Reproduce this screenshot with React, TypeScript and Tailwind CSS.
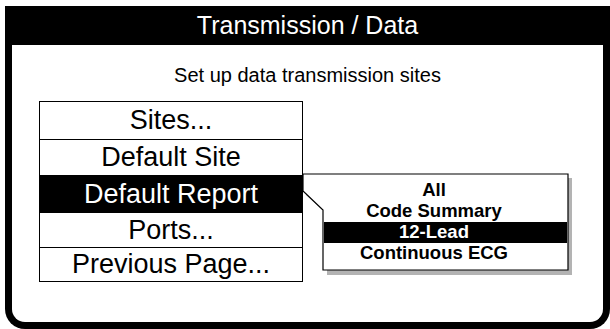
import React from "react";

const font = { fontFamily: '"Liberation Sans", Arial, sans-serif' };

export default function App() {
  const rows = [
    { label: "Sites...", h: "h-[37px]", active: false },
    { label: "Default Site", h: "h-[36px]", active: false },
    { label: "Default Report", h: "h-[38px]", active: true },
    { label: "Ports...", h: "h-[34px]", active: false },
    { label: "Previous Page...", h: "h-[34px]", active: false },
  ];
  const opts = [
    { label: "All", active: false },
    { label: "Code Summary", active: false },
    { label: "12-Lead", active: true },
    { label: "Continuous ECG", active: false },
  ];
  return (
    <div className="relative w-[610px] h-[329px] bg-white overflow-hidden pt-[6px] pl-[5px]" style={font}>
      <div className="w-[605px] h-[323px] border-x-[7px] border-b-[7px] border-black rounded-b-[20px] bg-white flex flex-col">
        <div className="h-[39px] bg-black flex items-center justify-center text-white text-[25px] leading-none">
          Transmission / Data
        </div>
        <div className="mt-[19px] text-center text-[20px] leading-[22px] text-black">
          Set up data transmission sites
        </div>
        <div className="mt-[15px] ml-[27px] w-[264px] border border-black flex flex-col">
          {rows.map((r, i) => (
            <div
              key={r.label}
              className={`${r.h} flex items-center justify-center text-[27px] leading-none ${
                r.active ? "bg-black text-white" : "bg-white text-black"
              } ${i > 0 && !r.active && !rows[i - 1].active ? "border-t border-black" : ""}`}
            >
              {r.label}
            </div>
          ))}
        </div>
      </div>

      {/* callout popup */}
      <svg className="absolute left-[302px] top-[173px]" width="272" height="104" viewBox="0 0 272 104">
        <polygon points="4,5 270,5 270,102 25,102 25,41 4,22" fill="#b3b3b3" />
        <polygon
          points="1,1 266,1 266,97 21,97 21,37 1,18"
          fill="white"
          stroke="black"
          strokeWidth="1.2"
        />
      </svg>
      <div className="absolute left-[324px] top-[180px] w-[243px] flex flex-col">
        {opts.map((o) => (
          <div
            key={o.label}
            className={`h-[21px] flex items-center justify-center pr-[23px] font-bold text-[18.5px] leading-none ${
              o.active ? "bg-black text-white" : "text-black"
            }`}
          >
            {o.label}
          </div>
        ))}
      </div>
    </div>
  );
}
